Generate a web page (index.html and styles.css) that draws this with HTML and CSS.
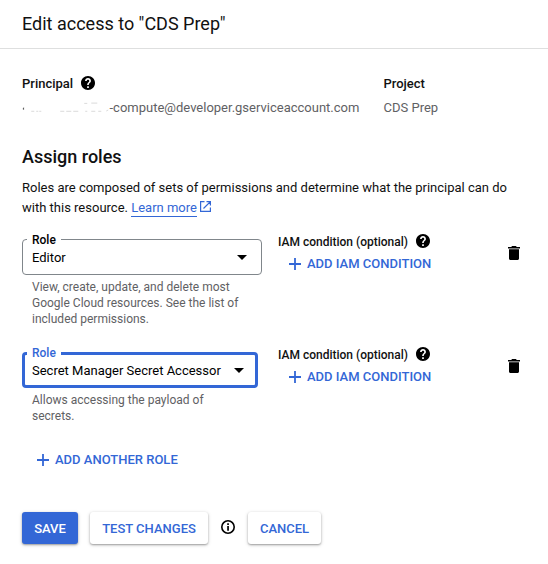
FILE: index.html
```html
<!DOCTYPE html>
<html lang="en">
<head>
<meta charset="utf-8">
<title>Edit access</title>
<link rel="stylesheet" href="styles.css">
</head>
<body>
<svg class="defs" width="0" height="0" aria-hidden="true">
  <symbol id="help" viewBox="2 2 20 20"><path d="M12 2C6.480 2 2 6.480 2 12s4.480 10 10 10 10-4.480 10-10S17.520 2 12 2zm1.200 17h-2.400v-2.400h2.400V19zm2.070-7.750l-.9.920C13.450 12.900 13.200 13.500 13.200 15h-2.400v-.5c0-1.100.45-2.100 1.170-2.830l1.240-1.260c.37-.36.59-.86.59-1.410 0-1.100-.8-1.800-1.800-1.800s-1.800.7-1.800 1.800H7.800c0-2.310 1.890-4 4.200-4s4.200 1.790 4.200 4c0 .88-.36 1.680-.93 2.250z"/></symbol>
  <symbol id="plus" viewBox="0 0 12 12"><path d="M5.100 0h1.800v5.100H12v1.800H6.900V12H5.100V6.900H0V5.100h5.100z"/></symbol>
  <symbol id="trash" viewBox="0 0 12 14"><path d="M4 0h4l.7 1H12v1.500H0V1h3.300zM1 3.200h10v9.300c0 .8-.7 1.500-1.500 1.500h-7C1.700 14 1 13.300 1 12.500z"/></symbol>
</svg>
<header class="header"><h1>Edit access to "CDS Prep"</h1></header>
<main class="content">
  <section class="summary">
    <div class="principal">
      <h2 class="label">Principal <svg class="help"><use href="#help"/></svg></h2>
      <p class="value"><svg class="redacted" viewBox="0 0 87 16"><path d="M.3 9l1.500-2v3z" fill="#555"/><path d="M9 11.300h3M14 11.300h2m1 0h2M38 11.300h4m2 0h5m2 0h5M62 3.400h3m4-.3h6M63 11.300h2m4 0h4m3 0h3M84 11l2-1" fill="none" stroke="#ccc" stroke-width=".7"/></svg><span>-compute@developer.gserviceaccount.com</span></p>
    </div>
    <div>
      <h2 class="label">Project</h2>
      <p class="value">CDS Prep</p>
    </div>
  </section>
  <h2 class="section-title">Assign roles</h2>
  <p class="intro">Roles are composed of sets of permissions and determine what the principal can do with this resource. <a class="link">Learn more</a><svg class="external" viewBox="0 0 11 11"><path d="M4.500.6H.6v9.800h9.800V6.500M6.500.6h3.900v3.900M10.400.6L3.500 7.500" fill="none" stroke="currentColor" stroke-width="1.200"/></svg></p>

  <div class="role-row">
    <div class="role">
      <div class="select"><span class="select-label">Role</span><span class="select-value">Editor</span><i class="arrow"></i></div>
      <p class="hint">View, create, update, and delete most Google Cloud resources. See the list of included permissions.</p>
    </div>
    <div class="condition">
      <h3 class="condition-label">IAM condition (optional) <svg class="help"><use href="#help"/></svg></h3>
      <div class="add"><svg class="plus"><use href="#plus"/></svg>ADD IAM CONDITION</div>
    </div>
    <svg class="trash"><use href="#trash"/></svg>
  </div>

  <div class="role-row">
    <div class="role">
      <div class="select focused"><span class="select-label">Role</span><span class="select-value">Secret Manager Secret Accessor</span><i class="arrow"></i></div>
      <p class="hint">Allows accessing the payload of secrets.</p>
    </div>
    <div class="condition">
      <h3 class="condition-label">IAM condition (optional) <svg class="help"><use href="#help"/></svg></h3>
      <div class="add"><svg class="plus"><use href="#plus"/></svg>ADD IAM CONDITION</div>
    </div>
    <svg class="trash"><use href="#trash"/></svg>
  </div>

  <div class="add add-role"><svg class="plus"><use href="#plus"/></svg>ADD ANOTHER ROLE</div>

  <div class="actions">
    <button class="btn primary">SAVE</button>
    <button class="btn test">TEST CHANGES</button>
    <svg class="info" viewBox="0 0 14 14"><circle cx="7" cy="7" r="6.200" fill="none" stroke="#000" stroke-width="1.600"/><path d="M6.200 3.300h1.700v1.600H6.200zM6.200 6h1.700v4.800H6.200z"/></svg>
    <button class="btn cancel">CANCEL</button>
  </div>
</main>
</body>
</html>
```
FILE: styles.css
```css
* { box-sizing: border-box; }
body {
  margin: 0;
  height: 564px;
  overflow: hidden;
  background: #fff;
  color: #111;
  font-family: Roboto, "Liberation Sans", sans-serif;
  font-size: 13px;
  line-height: 20px;
}
h1, h2, h3, p { margin: 0; }
svg { display: block; flex: none; }
.defs { position: absolute; }
.header { height: 49px; padding: 12px 22px 0; border-bottom: 1px solid #dedfdf; }
h1 { font-size: 18px; font-weight: 400; line-height: 24px; }
.content { padding: 25px 22px 0; }
.summary { display: flex; height: 69px; }
.principal { width: 361.500px; }
.label { display: flex; align-items: center; gap: 8px; height: 20px; font-size: 13px; font-weight: 500; }
.label .help { margin-top: -2px; }
.help { width: 14px; height: 14px; fill: #000; }
.value { display: flex; align-items: center; margin-top: 4px; color: #5f6164; }
.redacted { width: 87.500px; height: 16px; }
.section-title { height: 28px; font-size: 18px; font-weight: 500; line-height: 28px; }
.intro { height: 61px; margin-top: 7px; }
.link { color: #3367d6; border-bottom: 1px solid #3367d6; padding-bottom: 1px; }
.external { display: inline-block; width: 11px; height: 11px; margin-left: 3px; color: #3367d6; }
.role-row { display: flex; height: 113px; }
.role { width: 256px; }
.select {
  position: relative;
  display: flex;
  align-items: center;
  justify-content: space-between;
  width: 240px;
  height: 36px;
  padding: 0 14px 0 9px;
  border: 1px solid #80868b;
  border-radius: 4px;
  color: #000;
}
.select-label {
  position: absolute;
  top: -8px;
  left: 4px;
  padding: 0 5px;
  background: #fff;
  font-size: 12px;
  font-weight: 500;
  line-height: 16px;
}
.select-value { padding-top: 2px; }
.focused { width: 236px; padding: 0 11px 0 7px; border: 3px solid #3367d6; }
.focused .select-label { top: -10px; left: 2px; color: #3367d6; }
.arrow { border: 5px solid transparent; border-top-color: #000; border-bottom: 0; }
.hint { width: 212px; margin: 4px 0 0 10px; color: #5f6164; font-size: 12px; line-height: 16px; }
.condition { width: 230px; }
.condition-label { display: flex; align-items: center; gap: 8px; height: 16px; margin-top: -5px; font-size: 12px; font-weight: 500; }
.condition-label .help { margin-top: -2px; }
.add { display: flex; align-items: center; gap: 6px; height: 20px; margin: 4px 0 0 11px; color: #3367d6; font-weight: 500; }
.plus { width: 12px; height: 12px; fill: #3367d6; }
.trash { width: 12px; height: 14px; margin: 7px 0 0; fill: #000; }
.add-role { margin: -15px 0 0 15px; }
.actions { display: flex; align-items: center; height: 32px; margin-top: 42px; }
.btn {
  height: 32px;
  padding: 1px 0 0;
  border: 0;
  border-radius: 3px;
  background: #fff;
  color: #3367d6;
  box-shadow: 0 1px 2px rgba(0, 0, 0, .32), 0 1px 4px rgba(0, 0, 0, .14);
  font: 500 13px/31px Roboto, "Liberation Sans", sans-serif;
}
.primary { width: 56px; background: #3367d6; color: #fff; }
.test { width: 118px; margin-left: 12px; }
.info { width: 14px; height: 14px; margin: -2px 13px 0; }
.cancel { width: 73px; }
```
